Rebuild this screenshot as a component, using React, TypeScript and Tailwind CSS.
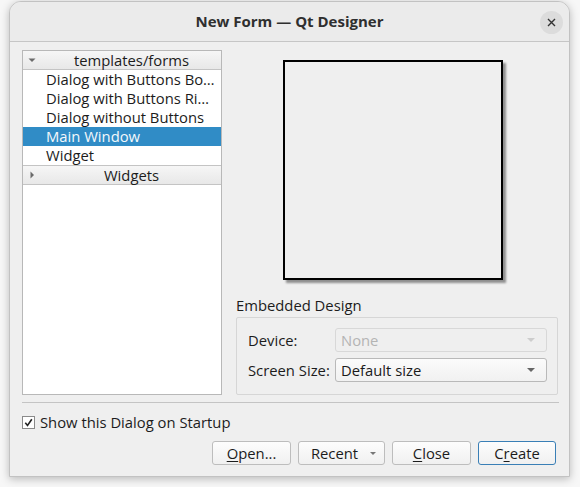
import type { ReactNode } from 'react';

const templates = [
  'Dialog with Buttons Bo…',
  'Dialog with Buttons Ri…',
  'Dialog without Buttons',
  'Main Window',
  'Widget',
];

function Caret({ open }: { open: boolean }) {
  return (
    <svg width="8" height="8" viewBox="0 0 8 8" className="shrink-0">
      {open ? <path d="M0.5 2.5h7L4 6z" fill="#6b6b6b" /> : <path d="M2.5 0.5v7L6 4z" fill="#6b6b6b" />}
    </svg>
  );
}

function SectionHeader({ label, open }: { label: string; open: boolean }) {
  return (
    <div className="flex h-[19px] items-center border-b border-[#c4c4c4] bg-gradient-to-b from-[#f6f6f6] to-[#e8e8e8] pl-[5px]">
      <Caret open={open} />
      <div className="flex-1 pl-[6px] text-center leading-[18px]">{label}</div>
    </div>
  );
}

function Combo({ value, disabled }: { value: string; disabled?: boolean }) {
  return (
    <div
      className={`flex h-[24px] w-[212px] items-center justify-between rounded-[3px] border px-[5px] ${
        disabled ? 'border-[#d8d8d8] bg-[#efefef] text-[#b4b4b4]' : 'border-[#b9b9b9] bg-gradient-to-b from-[#fbfbfb] to-[#f1f1f1] text-[#1a1a1a]'
      }`}
    >
      <span>{value}</span>
      <svg width="8" height="4" viewBox="0 0 8 4" className="mr-[6px]">
        <path d="M0 0h8L4 4z" fill={disabled ? '#cdcdcd' : '#666'} />
      </svg>
    </div>
  );
}

function Button({ children, primary, width }: { children: ReactNode; primary?: boolean; width: string }) {
  return (
    <div
      className={`flex h-[24px] items-center justify-center rounded-[3px] border bg-gradient-to-b from-[#fdfdfd] to-[#f0f0f0] ${width} ${
        primary ? 'border-[#3a7fb6]' : 'border-[#bdbdbd]'
      }`}
    >
      {children}
    </div>
  );
}

export default function App() {
  return (
    <div className="h-[487px] w-[580px] overflow-hidden bg-[#f7f7f7] pl-[9px] pt-[1px] text-[14.8px] text-[#1c1c1c] [font-family:'Open_Sans','Noto_Sans',sans-serif]">
      <div className="flex h-[476px] w-[561px] flex-col overflow-hidden rounded-t-[12px] border border-[#c2c2c2] bg-[#efefef] shadow-[0_2px_8px_rgba(0,0,0,0.25)]">
        {/* title bar */}
        <div className="relative flex h-[40px] shrink-0 items-center justify-center border-b border-[#c6c6c6] bg-[#ebebeb]">
          <span className="text-[15px] font-bold text-[#2f2f2f]">New Form — Qt Designer</span>
          <div className="absolute right-[6px] top-[9px] flex h-[23px] w-[23px] items-center justify-center rounded-full bg-[#dcdcdc]">
            <svg width="9" height="9" viewBox="0 0 9 9">
              <path d="M1 1l7 7M8 1L1 8" stroke="#333" strokeWidth="1.4" />
            </svg>
          </div>
        </div>

        <div className="flex flex-1 flex-col px-[12px] pt-[8px]">
          <div className="flex gap-[14px]">
            {/* template tree */}
            <div className="h-[345px] w-[200px] shrink-0 border border-[#b8b8b8] bg-white">
              <SectionHeader label="templates/forms" open />
              {templates.map((t) => (
                <div
                  key={t}
                  className={`h-[19px] whitespace-nowrap pl-[23px] leading-[19px] ${
                    t === 'Main Window' ? 'bg-[#308cc6] text-[#f4f8fb]' : ''
                  }`}
                >
                  {t}
                </div>
              ))}
              <div className="border-t border-[#c4c4c4]">
                <SectionHeader label="Widgets" open={false} />
              </div>
            </div>

            {/* preview + embedded design */}
            <div className="flex flex-1 flex-col">
              <div className="ml-[47px] mt-[10px] h-[220px] w-[220px] border-2 border-black bg-[#efefef] shadow-[3px_3px_2px_rgba(0,0,0,0.4)]" />
              <div className="mt-[15px] leading-[20px]">Embedded Design</div>
              <div className="mt-[2px] flex h-[78px] w-[322px] flex-col gap-[6px] rounded-[2px] border border-[#d6d6d6] pl-[11px] pt-[10px]">
                <div className="flex items-center">
                  <span className="w-[87px]">Device:</span>
                  <Combo value="None" disabled />
                </div>
                <div className="flex items-center">
                  <span className="w-[87px]">Screen Size:</span>
                  <Combo value="Default size" />
                </div>
              </div>
            </div>
          </div>

          <div className="mt-[7px] h-px w-[537px] bg-[#c4c4c4]" />

          <div className="mt-[9px] flex h-[20px] items-center gap-[5px]">
            <div className="flex h-[13px] w-[13px] items-center justify-center border border-[#8a8a8a] bg-white">
              <svg width="9" height="9" viewBox="0 0 9 9">
                <path d="M1.3 4.8l2.2 2.6L7.8 1.2" stroke="#222" strokeWidth="1.6" fill="none" />
              </svg>
            </div>
            <span>Show this Dialog on Startup</span>
          </div>

          <div className="mt-[9px] flex justify-end gap-[7px] pr-[1px]">
            <Button width="w-[79px]">
              <span>
                <span className="underline underline-offset-2">O</span>pen...
              </span>
            </Button>
            <Button width="w-[87px]">
              <span className="relative flex w-full items-center justify-center pr-[14px]">
                Recent
                <svg width="6" height="3" viewBox="0 0 6 3" className="absolute right-[8px]">
                  <path d="M0 0h6L3 3z" fill="#777" />
                </svg>
              </span>
            </Button>
            <Button width="w-[79px]">
              <span>
                <span className="underline underline-offset-2">C</span>lose
              </span>
            </Button>
            <Button width="w-[78px]" primary>
              <span>
                C<span className="underline underline-offset-2">r</span>eate
              </span>
            </Button>
          </div>
        </div>
      </div>
    </div>
  );
}
